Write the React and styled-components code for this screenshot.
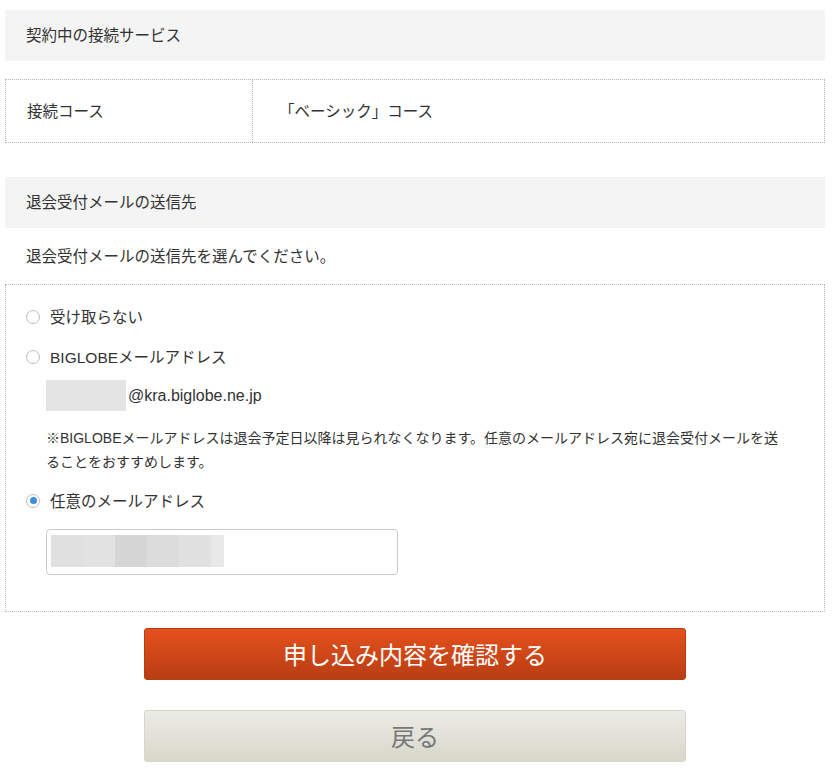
import React from "react";
import styled, { createGlobalStyle } from "styled-components";

const GlobalStyle = createGlobalStyle`
  body {
    margin: 0;
    background: #fff;
    color: #333;
    font-family: "Liberation Sans", "Noto Sans CJK JP", sans-serif;
  }
`;

const Page = styled.div`
  width: 820px;
  padding: 10px 11px 14px 5px;
`;

const SectionHeader = styled.div`
  height: 51px;
  box-sizing: border-box;
  padding: 0 0 3px 21px;
  display: flex;
  align-items: center;
  background: #f4f4f4;
  font-size: 15.5px;
  color: #333;
`;

const Table = styled.div`
  display: grid;
  grid-template-columns: 246px 1fr;
  height: 64px;
  margin: 18px 0 34px;
  border: 1px dotted #b8b8b8;
  box-sizing: border-box;
`;

const Cell = styled.div`
  display: flex;
  align-items: center;
  padding-left: ${(p) => p.$pad}px;
  padding-bottom: 2px;
  font-size: 15.5px;
  border-left: ${(p) => (p.$divider ? "1px dotted #b8b8b8" : "none")};
`;

const Lead = styled.p`
  margin: 0;
  height: 56px;
  box-sizing: border-box;
  padding: 0 0 2px 21px;
  display: flex;
  align-items: center;
  font-size: 15.5px;
`;

const OptionBox = styled.div`
  border: 1px dotted #b8b8b8;
  padding: 20px 20px 36px 20px;
`;

const Option = styled.label`
  display: flex;
  align-items: center;
  gap: 10px;
  height: 22px;
  margin-top: ${(p) => p.$top || 0}px;
  font-size: 15.5px;
  cursor: pointer;
`;

const Radio = styled.span`
  width: 14px;
  height: 14px;
  margin-top: 1px;
  border-radius: 50%;
  border: 1px solid #bdbdbd;
  background: #fff;
  box-sizing: border-box;
  display: flex;
  align-items: center;
  justify-content: center;
  &::after {
    content: "";
    width: 7px;
    height: 7px;
    border-radius: 50%;
    background: ${(p) => (p.$checked ? "#3b8fe0" : "transparent")};
  }
`;

const Indent = styled.div`
  padding-left: 20px;
`;

const AddressRow = styled.div`
  display: flex;
  align-items: center;
  gap: 2px;
  margin-top: 13px;
  font-size: 16px;
`;

const Masked = styled.span`
  display: block;
  width: ${(p) => p.$w}px;
  height: ${(p) => p.$h}px;
  background: ${(p) => p.$bg};
`;

const Note = styled.p`
  margin: 15px 0 0;
  font-size: 14px;
  line-height: 24px;
  color: #333;
  padding-right: 20px;
`;

const Input = styled.div`
  width: 352px;
  height: 46px;
  margin-top: 18px;
  box-sizing: border-box;
  border: 1px solid #c9c9c9;
  border-radius: 4px;
  padding: 5px 4px;
  display: flex;
`;

const Buttons = styled.div`
  display: flex;
  flex-direction: column;
  align-items: center;
  gap: 30px;
  margin-top: 16px;
`;

const Button = styled.button`
  width: 542px;
  height: 52px;
  padding: 0 0 2px;
  border-radius: 3px;
  font-family: inherit;
  font-size: 24px;
  cursor: pointer;
  ${(p) =>
    p.$primary
      ? `
    color: #fff;
    border: 1px solid #b63c12;
    background: linear-gradient(#e5501c, #b83e14);
  `
      : `
    color: #777;
    border: 1px solid #d6d6cc;
    background: linear-gradient(#ecece6, #d7d7cb);
  `}
`;

const maskTiles = ["#e0e0e0", "#e2e2e2", "#d6d6d6", "#dcdcdc", "#e1e1e1", "#e8e8e8"];

export default function App() {
  return (
    <Page>
      <GlobalStyle />
      <SectionHeader>契約中の接続サービス</SectionHeader>
      <Table>
        <Cell $pad={21}>接続コース</Cell>
        <Cell $pad={26} $divider>「ベーシック」コース</Cell>
      </Table>

      <SectionHeader>退会受付メールの送信先</SectionHeader>
      <Lead>退会受付メールの送信先を選んでください。</Lead>

      <OptionBox>
        <Option>
          <Radio />
          受け取らない
        </Option>
        <Option $top={18}>
          <Radio />
          BIGLOBEメールアドレス
        </Option>
        <Indent>
          <AddressRow>
            <Masked $w={80} $h={31} $bg="#e4e4e4" />
            @kra.biglobe.ne.jp
          </AddressRow>
          <Note>
            ※BIGLOBEメールアドレスは退会予定日以降は見られなくなります。任意のメールアドレス宛に退会受付メールを送ることをおすすめします。
          </Note>
        </Indent>
        <Option $top={15}>
          <Radio $checked />
          任意のメールアドレス
        </Option>
        <Indent>
          <Input>
            {maskTiles.map((c, i) => (
              <Masked key={i} $w={i === 5 ? 13 : 32} $h={32} $bg={c} />
            ))}
          </Input>
        </Indent>
      </OptionBox>

      <Buttons>
        <Button $primary>申し込み内容を確認する</Button>
        <Button>戻る</Button>
      </Buttons>
    </Page>
  );
}
